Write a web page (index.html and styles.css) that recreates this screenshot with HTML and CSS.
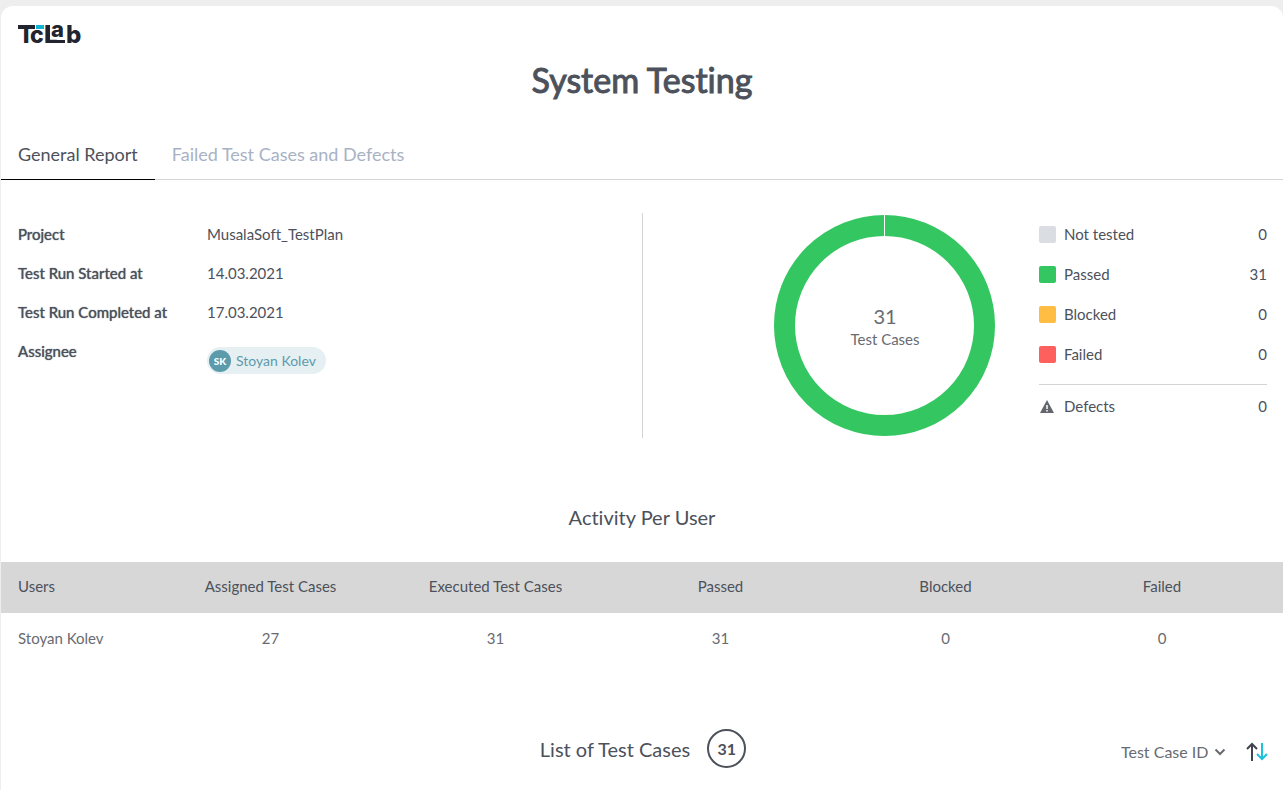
FILE: index.html
```html
<!DOCTYPE html>
<html lang="en">
<head>
<meta charset="utf-8">
<title>System Testing</title>
<link rel="stylesheet" href="styles.css">
</head>
<body>
<main class="sheet">
  <header class="head">
    <svg class="logo" viewBox="0 0 64 20" role="img" aria-label="TcLab">
      <g class="logo-letters">
        <text x="0" y="18" font-size="24">T</text>
        <text x="12" y="18" font-size="23">c</text>
        <text x="26" y="18" font-size="24">L</text>
        <text x="33" y="12" font-size="22">a</text>
        <text x="48" y="18" font-size="24">b</text>
      </g>
      <rect class="logo-ink" x="0" y="0" width="17" height="4"/>
      <rect class="logo-ink" x="28" y="0" width="4" height="18"/>
      <rect class="logo-ink" x="28" y="15" width="19" height="3"/>
      <rect class="logo-accent" x="18" y="0" width="8" height="4"/>
    </svg>
    <h1 class="title">System Testing</h1>
  </header>

  <nav class="tabs">
    <a class="tab tab-active" href="#general">General Report</a>
    <a class="tab" href="#failed">Failed Test Cases and Defects</a>
  </nav>

  <section class="summary" id="general">
    <dl class="info">
      <dt>Project</dt><dd>MusalaSoft_TestPlan</dd>
      <dt>Test Run Started at</dt><dd>14.03.2021</dd>
      <dt>Test Run Completed at</dt><dd>17.03.2021</dd>
      <dt>Assignee</dt><dd><span class="chip"><span class="avatar">SK</span>Stoyan Kolev</span></dd>
    </dl>
    <div class="results">
      <div class="chart">
        <svg class="donut" viewBox="0 0 222 222" aria-hidden="true">
          <circle cx="110.500" cy="110.500" r="100" fill="none" stroke="#34c660" stroke-width="21"/>
          <path d="M110.500 0V23" stroke="#fff" stroke-width="1"/>
        </svg>
        <div class="chart-label"><span class="chart-count">31</span><span>Test Cases</span></div>
      </div>
      <ul class="legend">
        <li><span class="swatch untested"></span>Not tested<span class="count">0</span></li>
        <li><span class="swatch passed"></span>Passed<span class="count">31</span></li>
        <li><span class="swatch blocked"></span>Blocked<span class="count">0</span></li>
        <li><span class="swatch failed"></span>Failed<span class="count">0</span></li>
        <li class="defects">
          <svg class="warn" viewBox="0 0 17 17" aria-hidden="true"><path d="M8 2 15 15H1Z" fill="#63666a"/><path d="M8 7V11M8 12V13.500" stroke="#fff" stroke-width="1.500"/></svg>Defects<span class="count">0</span></li>
      </ul>
    </div>
  </section>

  <section class="activity">
    <h2 class="section-title">Activity Per User</h2>
    <table class="users">
      <thead>
        <tr><th>Users</th><th>Assigned Test Cases</th><th>Executed Test Cases</th><th>Passed</th><th>Blocked</th><th>Failed</th></tr>
      </thead>
      <tbody>
        <tr><td>Stoyan Kolev</td><td>27</td><td>31</td><td>31</td><td>0</td><td>0</td></tr>
      </tbody>
    </table>
  </section>

  <section class="list-head">
    <h2 class="list-title">List of Test Cases <span class="badge">31</span></h2>
    <div class="sort">
      <label class="picker">
        <select class="sort-select" aria-label="Sort by"><option>Test Case ID</option></select>
        <svg class="chevron" viewBox="0 0 12 8" aria-hidden="true"><path d="M1.500 1.500 6 6 10.500 1.500"/></svg>
      </label>
      <button class="order" type="button" aria-label="Change sort order">
        <svg viewBox="0 0 22 20" aria-hidden="true">
          <path d="M6 19V2M1 7 6 2 11 7" stroke="#40444f"/>
          <path d="M16 1V17M11 12 16 17 21 12" stroke="#1cc2dc"/>
        </svg>
      </button>
    </div>
  </section>
</main>
</body>
</html>
```
FILE: styles.css
```css
* { box-sizing: border-box; }
body {
  margin: 0;
  padding: 6px 0 0 1px;
  background: #eee;
  color: #4c515b;
  font: 15px/20px Lato, "Liberation Sans", sans-serif;
  font-variant-ligatures: none;
}
.sheet {
  min-height: calc(100vh - 6px);
  background: #fff;
  border-radius: 12px 12px 0 0;
}
.head { padding: 19px 17px 0; }
.logo { display: block; width: 64px; height: 20px; overflow: visible; }
.logo-letters { font-family: Inter, sans-serif; font-weight: 800; fill: #22252f; }
.logo-ink { fill: #22252f; }
.logo-accent { fill: #10b5cf; }
.title {
  margin: 11px 0 0;
  font-size: 34px;
  line-height: 48px;
  font-weight: 400;
  -webkit-text-stroke: 1px #4c515b;
  text-align: center;
}
.tabs {
  display: flex;
  margin-top: 26px;
  border-bottom: 1px solid #d4d4d4;
}
.tab {
  margin-bottom: -1px;
  padding: 12px 17px;
  border-bottom: 1px solid transparent;
  color: #a8b2c4;
  font-size: 18px;
  line-height: 25px;
  text-decoration: none;
}
.tab-active { color: #4c515b; border-color: #000; }
.summary {
  display: grid;
  grid-template-columns: 1fr 1fr;
  margin-top: 33px;
}
.info {
  display: grid;
  grid-template-columns: 189px 1fr;
  align-content: start;
  row-gap: 19px;
  margin: 0;
  padding: 11px 17px 0;
}
.info dt { text-shadow: 0 0 1px #4c515b; }
.info dd { margin: 0; }
.chip {
  display: inline-flex;
  align-items: center;
  gap: 5px;
  height: 27px;
  margin-top: 6px;
  padding: 0 10px 0 2px;
  border-radius: 14px;
  background: #e6eff2;
  color: #5b9bac;
  font-size: 14px;
}
.avatar {
  width: 22px;
  border-radius: 50%;
  background: #5b9bac;
  color: #fff;
  font-size: 10px;
  line-height: 22px;
  font-weight: 900;
  text-align: center;
}
.results {
  display: flex;
  justify-content: flex-end;
  gap: 43px;
  min-height: 225px;
  padding: 0 16px 0 0;
  border-left: 1px solid #d4d4d4;
}
.chart { display: grid; place-items: center; width: 222px; height: 225px; }
.donut, .chart-label { grid-area: 1 / 1; }
.donut { width: 222px; height: 222px; }
.chart-label { display: grid; justify-items: center; color: #686b70; padding-top: 2px; }
.chart-count { font-size: 20px; line-height: 25px; }
.legend { width: 228px; margin: 0; padding: 11px 0 0; list-style: none; }
.legend li { display: flex; align-items: center; gap: 8px; margin-bottom: 20px; }
.count { margin-left: auto; }
.swatch { width: 17px; height: 17px; border-radius: 2px; }
.untested { background: #dadde2; }
.passed { background: #34c660; }
.blocked { background: #ffbd43; }
.failed { background: #fd605d; }
.legend .defects { padding-top: 11px; margin: 0; border-top: 1px solid #d4d4d4; }
.warn { width: 17px; height: 17px; }
.activity { padding-top: 64px; }
.section-title, .list-title { margin: 0; font-size: 20px; line-height: 30px; font-weight: 400; text-align: center; }
.users { width: 100%; margin-top: 30px; table-layout: fixed; border-collapse: collapse; }
.users th, .users td { padding: 0 0 2px; height: 51px; font-weight: 400; text-align: center; }
.users th { padding-bottom: 3px; background: #d7d7d7; }
.users td { color: #686b70; }
.users th:first-child, .users td:first-child { width: 157px; padding-left: 17px; text-align: left; }
.users th:last-child, .users td:last-child { padding-right: 17px; }
.list-head {
  display: grid;
  grid-template-columns: 1fr auto 1fr;
  align-items: center;
  margin-top: 65px;
  padding: 0 15px 0 17px;
}
.list-title { grid-column: 2; display: flex; align-items: center; gap: 17px; }
.badge {
  width: 39px;
  height: 39px;
  border: 2px solid #4c515b;
  border-radius: 50%;
  font-size: 16px;
  line-height: 36px;
  font-weight: 700;
}
.sort { justify-self: end; display: flex; align-items: center; gap: 20px; padding-top: 6px; }
.picker { display: flex; align-items: center; gap: 5px; }
.sort-select {
  appearance: none;
  padding: 0;
  border: 0;
  background: none;
  color: #686b70;
  font: inherit;
  font-size: 16px;
}
.chevron { width: 12px; height: 8px; fill: none; stroke: #686b70; stroke-width: 2; }
.order { display: block; padding: 0; border: 0; background: none; }
.order svg { display: block; width: 22px; height: 20px; fill: none; stroke-width: 2; }
```
